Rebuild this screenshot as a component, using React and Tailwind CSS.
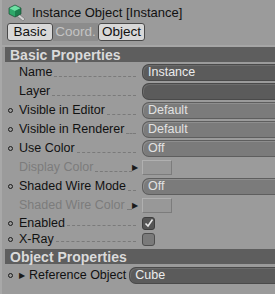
import React from 'react';

const Marker = ({ on }) => (
  <span className="w-[17px] shrink-0 flex items-center pl-[6px]">
    {on && <span className="w-[5px] h-[5px] rounded-full border border-[#1a1a1a]" />}
  </span>
);

const Leader = () => (
  <span className="flex-1 self-end mb-[5px] ml-[2px] mr-[3px] border-b border-dashed border-[#7a7a7a]" />
);

const Field = ({ text, dark }) => (
  <div
    className={`flex-1 h-[17px] rounded-l-[7px] border border-r-0 flex items-center pl-[5px] text-[12.5px] ${
      dark
        ? 'bg-[#5b5b5b] border-[#4a4a4a] text-[#ececec] shadow-[inset_1px_1px_0_#6c6c6c]'
        : 'bg-[#7b7b7b] border-[#5e5e5e] text-[#e2e2e2] shadow-[inset_1px_1px_0_#8e8e8e]'
    }`}
  >
    {text}
  </div>
);

const Row = ({ label, marker, disabled, arrow, children, h = 'h-[19px]' }) => (
  <div className={`flex items-center ${h}`}>
    <div className="w-[137px] shrink-0 flex items-center h-full">
      <Marker on={marker} />
      <span className={`whitespace-nowrap ${disabled ? 'text-[#7c7c7c]' : 'text-[#111]'}`}>{label}</span>
      <Leader />
      {arrow && <span className="text-[8px] leading-none text-[#1a1a1a] -ml-[3px] mr-[1px]">▶</span>}
    </div>
    <div className="flex-1 flex items-center pl-[3px]">{children}</div>
  </div>
);

const ColorBox = () => (
  <div className="w-[30px] h-[15px] border border-[#b0b0b0] border-r-[#7c7c7c] border-b-[#7c7c7c] bg-[#989898]" />
);

const Check = ({ checked }) => (
  <div
    className={`w-[13px] h-[13px] rounded-[3px] border flex items-center justify-center ${
      checked ? 'bg-[#555] border-[#3e3e3e]' : 'bg-[#7a7a7a] border-[#4e4e4e]'
    }`}
  >
    {checked && (
      <svg width="10" height="10" viewBox="0 0 10 10">
        <path d="M1.5 5.5 L4 8 L8.5 1.5" fill="none" stroke="#e8e8e8" strokeWidth="1.6" />
      </svg>
    )}
  </div>
);

const Header = ({ title }) => (
  <div className="h-[15px] bg-[#5e5e5e] ml-[3px] pl-[5px] flex items-center text-[14px] font-bold text-[#dadada] leading-none">
    {title}
  </div>
);

const InstanceIcon = () => (
  <svg width="18" height="18" viewBox="0 0 18 18">
    <path d="M11 10 L17 15 L15 17 L9 12 Z" fill="#d0d0d0" stroke="#6a6a6a" strokeWidth="0.6" />
    <path d="M7 1 L13 4 L13 10 L7 13 L1 10 L1 4 Z" fill="#2fa86a" />
    <path d="M7 1 L13 4 L7 7 L1 4 Z" fill="#6fe0a4" />
    <path d="M7 7 L13 4 L13 10 L7 13 Z" fill="#1d7f4e" />
    <path d="M7 1 L13 4 L13 10 L7 13 L1 10 L1 4 Z" fill="none" stroke="#1c4a33" strokeWidth="0.7" />
  </svg>
);

const App = () => {
  return (
    <div className="w-[275px] h-[294px] bg-[#9b9b9b] overflow-hidden font-['Liberation_Sans',Arial,sans-serif] text-[12.5px] border-l-[2px] border-[#a8a8a8]">
      <div className="h-[23px] flex items-center pl-[6px] gap-[6px] pt-[2px]">
        <InstanceIcon />
        <span className="text-[13px] text-[#111]">Instance Object [Instance]</span>
      </div>
      <div className="flex h-[18px] pl-[5px] text-[13.5px] leading-none">
        <div className="w-[46px] rounded-[3px] border border-[#4a4a4a] bg-[#d8d8d8] text-[#111] flex items-center justify-center">Basic</div>
        <div className="w-[45px] bg-[#8c8c8c] text-[#c4c4c4] flex items-center justify-center">Coord.</div>
        <div className="w-[47px] rounded-[3px] border border-[#4a4a4a] bg-[#d8d8d8] text-[#111] flex items-center justify-center">Object</div>
      </div>
      <div className="h-[6px] border-b-[2px] border-[#a6a6a6]" />
      <Header title="Basic Properties" />
      <div className="h-[1px]" />
      <Row label="Name"><Field text="Instance" dark /></Row>
      <Row label="Layer"><Field text="" dark /></Row>
      <Row label="Visible in Editor" marker><Field text="Default" /></Row>
      <Row label="Visible in Renderer" marker><Field text="Default" /></Row>
      <Row label="Use Color" marker><Field text="Off" /></Row>
      <Row label="Display Color" disabled arrow><ColorBox /></Row>
      <Row label="Shaded Wire Mode" marker><Field text="Off" /></Row>
      <Row label="Shaded Wire Color" disabled arrow><ColorBox /></Row>
      <Row label="Enabled" marker h="h-[16px]"><Check checked /></Row>
      <Row label="X-Ray" marker h="h-[16px]"><Check /></Row>
      <div className="h-[2px]" />
      <Header title="Object Properties" />
      <div className="flex items-center h-[21px] pt-[2px]">
        <Marker on />
        <span className="text-[8px] leading-none text-[#1a1a1a] mr-[4px]">▶</span>
        <span className="text-[#111] whitespace-nowrap">Reference Object</span>
        <div className="flex-1 flex items-center pl-[3px]">
          <Field text="Cube" dark />
        </div>
      </div>
    </div>
  );
};

export default App;
